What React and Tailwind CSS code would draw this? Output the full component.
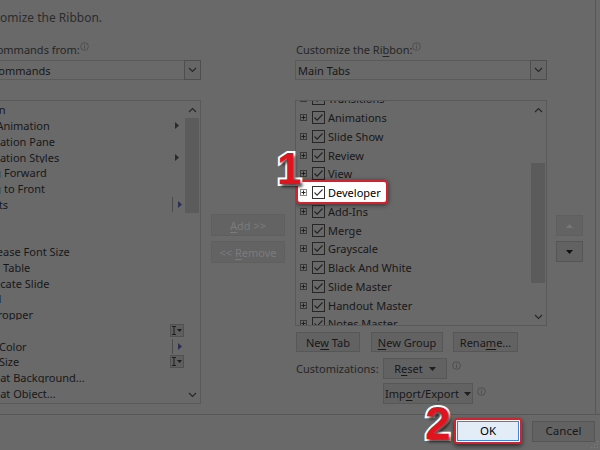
import React from 'react';

const leftItems = [
  { label: 'Action' },
  { label: 'Add Animation', right: 'arrow' },
  { label: 'Animation Pane' },
  { label: 'Animation Styles', right: 'arrow' },
  { label: 'Bring Forward' },
  { label: 'Bring to Front' },
  { label: 'Bullets', right: 'split' },
  { label: 'Copy' },
  { label: 'Cut' },
  { label: 'Decrease Font Size' },
  { label: 'Draw Table' },
  { label: 'Duplicate Slide' },
  { label: 'Email' },
  { label: 'Eyedropper' },
  { label: 'Font', right: 'field' },
  { label: 'Font Color', right: 'split' },
  { label: 'Font Size', right: 'field' },
  { label: 'Format Background...' },
  { label: 'Format Object...' },
];

const tabs = [
  'Transitions', 'Animations', 'Slide Show', 'Review', 'View', 'Developer',
  'Add-Ins', 'Merge', 'Grayscale', 'Black And White', 'Slide Master',
  'Handout Master', 'Notes Master',
];

function Chevron({ up }) {
  return (
    <svg width="9" height="6" viewBox="0 0 9 6">
      <path d={up ? 'M1 5l3.5-3.5L8 5' : 'M1 1l3.5 3.5L8 1'} fill="none" stroke="#262626" strokeWidth="1.1" />
    </svg>
  );
}

function Info() {
  return (
    <svg width="9" height="9" viewBox="0 0 10 10" className="shrink-0">
      <circle cx="5" cy="5" r="4.3" fill="none" stroke="#474747" strokeWidth="0.8" />
      <path d="M5 4.2v3.4M5 2.5v1" stroke="#474747" strokeWidth="0.9" />
    </svg>
  );
}

function Tri({ color = '#1e1e1e' }) {
  return (
    <svg width="7" height="4" viewBox="0 0 7 4">
      <path d="M0 0h7L3.5 4z" fill={color} />
    </svg>
  );
}

function RightWidget({ type }) {
  if (type === 'arrow') {
    return (
      <svg width="4" height="7" viewBox="0 0 4 7">
        <path d="M0 0l4 3.5L0 7z" fill="#2a2a2a" />
      </svg>
    );
  }
  if (type === 'split') {
    return (
      <div className="flex items-center h-full">
        <span className="w-px h-[15px] bg-[#4a4a4a] mr-[5px]" />
        <svg width="4" height="7" viewBox="0 0 4 7">
          <path d="M0 0l4 3.5L0 7z" fill="#2a2f55" />
        </svg>
      </div>
    );
  }
  if (type === 'field') {
    return (
      <div className="w-[14px] h-[13px] border border-[#505050] bg-[#5f5f5f] flex items-center justify-center gap-[1px]">
        <svg width="4" height="9" viewBox="0 0 4 9">
          <path d="M0 0.5h4M0 8.5h4M2 0.5v8" stroke="#1e1e1e" strokeWidth="1" />
        </svg>
        <svg width="5" height="3" viewBox="0 0 5 3">
          <path d="M0 0h5L2.5 3z" fill="#1e1e1e" />
        </svg>
      </div>
    );
  }
  return null;
}

function PlusBox({ light }) {
  return (
    <svg width="7" height="7" viewBox="0 0 7 7" className="shrink-0">
      <rect x="0.5" y="0.5" width="6" height="6" fill="none" stroke={light ? '#8a8a8a' : '#3a3a3a'} />
      <path d="M1.5 3.5h4M3.5 1.5v4" stroke={light ? '#222' : '#1e1e1e'} strokeWidth="1" />
    </svg>
  );
}

function Check({ light }) {
  return (
    <svg width="13" height="13" viewBox="0 0 13 13" className="shrink-0">
      <rect x="0.5" y="0.5" width="12" height="12" fill="none" stroke={light ? '#333' : '#262626'} />
      <path d="M2.5 6.5l2.6 2.6L10.5 3.5" fill="none" stroke={light ? '#333' : '#222'} strokeWidth="1.1" />
    </svg>
  );
}

function TabRow({ label, highlight }) {
  return (
    <div className="relative h-[18.75px] flex items-center pl-[4px] shrink-0">
      {highlight && (
        <span className="absolute left-0 top-[-3px] bottom-[-2px] w-[92px] bg-white border-2 border-[#d3222f] rounded-[4px] shadow-[0_1px_5px_rgba(0,0,0,0.55)]" />
      )}
      <span className="relative flex items-center">
        <PlusBox light={highlight} />
        <span className="ml-[5px]"><Check light={highlight} /></span>
        <span className={'ml-[3px] whitespace-nowrap ' + (highlight ? 'text-black' : '')}>{label}</span>
      </span>
    </div>
  );
}

function Btn({ className = '', children }) {
  return (
    <div className={'h-full border border-[#575757] bg-[#626262] flex items-center justify-center whitespace-nowrap ' + className}>
      {children}
    </div>
  );
}

function Dropdown({ text, pad = 'pl-[4px]' }) {
  return (
    <div className="mt-[3px] h-[20px] border border-[#5a5a5a] flex items-stretch">
      <div className={'flex-1 flex items-center whitespace-nowrap overflow-hidden ' + pad}>{text}</div>
      <div className="w-[17px] border border-[#4e4e4e] bg-[#666] flex items-center justify-center -my-px -mr-px">
        <Chevron />
      </div>
    </div>
  );
}

function Scrollbar({ thumbTop, thumbHeight }) {
  return (
    <div className="w-[16px] flex flex-col items-center">
      <div className="h-[17px] flex items-center justify-center shrink-0"><Chevron up /></div>
      <div className="flex-1 w-full flex flex-col">
        <div style={{ height: thumbTop }} className="shrink-0" />
        <div style={{ height: thumbHeight }} className="mx-[1px] bg-[#5b5b5b] shrink-0" />
      </div>
      <div className="h-[17px] flex items-center justify-center shrink-0"><Chevron /></div>
    </div>
  );
}

export default function App() {
  return (
    <div className="w-[600px] h-[450px] overflow-hidden relative bg-[#696969] text-[#181818] text-[11px] font-['Noto_Sans',sans-serif] leading-none">
      <div className="ml-[-48px] w-[648px] h-full flex flex-col">
        {/* top pane */}
        <div className="h-[415px] border-b border-[#575757] flex shrink-0">
          <div className="w-[644px] border-r border-[#575757] flex flex-col">
            <div className="h-[36px] flex items-center pl-[23px] text-[12px] text-[#2c2c2c] whitespace-nowrap">
              Customize the Ribbon.
            </div>
            <div className="flex pt-[5px]">
              {/* left column */}
              <div className="w-[249px] flex flex-col">
                <div className="h-[16px] flex items-center whitespace-nowrap text-[#262626] -ml-[2px]">
                  <span>Choose commands from:</span>
                  <span className="self-start mt-[1px]"><Info /></span>
                </div>
                <Dropdown text="Popular Commands" pad="pl-0 -ml-[5px]" />
                <div className="mt-[20px] h-[304px] border border-[#595959] flex overflow-hidden">
                  <div className="flex-1 flex flex-col pt-[1px] overflow-hidden">
                    {leftItems.map((it) => (
                      <div key={it.label} className="h-[15.75px] flex items-center shrink-0">
                        <div className="flex-1 pl-[20px] whitespace-nowrap overflow-hidden">{it.label}</div>
                        <div className="w-[14px] h-full flex items-center justify-center">
                          <RightWidget type={it.right} />
                        </div>
                      </div>
                    ))}
                  </div>
                  <Scrollbar thumbTop={0} thumbHeight={95} />
                </div>
              </div>

              {/* middle buttons */}
              <div className="w-[94px] flex flex-col pt-[173px] px-[10px] gap-[5px]">
                <div className="h-[22px] border border-[#5f5f5f] bg-[#636363] text-[#7b7b7b] flex items-center justify-center">
                  <span><u className="underline-offset-2">A</u>dd &gt;&gt;</span>
                </div>
                <div className="h-[22px] border border-[#5f5f5f] bg-[#636363] text-[#7b7b7b] flex items-center justify-center">
                  <span>&lt;&lt; <u className="underline-offset-2">R</u>emove</span>
                </div>
              </div>

              {/* right column */}
              <div className="w-[252px] flex flex-col">
                <div className="h-[16px] flex items-center whitespace-nowrap text-[#262626] pl-[1px]">
                  <span>Customize the Ri<u className="underline-offset-2">b</u>bon:</span>
                  <span className="self-start mt-[1px]"><Info /></span>
                </div>
                <Dropdown text="Main Tabs" pad="pl-[2px]" />
                <div className="mt-[20px] h-[226px] border border-[#595959] flex overflow-hidden">
                  <div className="flex-1 flex flex-col mt-[-11.5px]">
                    {tabs.map((t) => (
                      <TabRow key={t} label={t} highlight={t === 'Developer'} />
                    ))}
                  </div>
                  <Scrollbar thumbTop={45} thumbHeight={120} />
                </div>
                <div className="mt-[6px] h-[20px] flex gap-[10px] pl-[1px]">
                  <Btn className="w-[64px]"><span>Ne<u className="underline-offset-2">w</u> Tab</span></Btn>
                  <Btn className="w-[72px] ml-[1px]"><span><u className="underline-offset-2">N</u>ew Group</span></Btn>
                  <Btn className="w-[65px]"><span>Rena<u className="underline-offset-2">m</u>e...</span></Btn>
                </div>
                <div className="mt-[6px] h-[21px] flex items-center">
                  <span className="w-[88px] pl-[1px] text-[#262626]">Customizations:</span>
                  <Btn className="w-[64px] gap-[6px]"><span>R<u className="underline-offset-2">e</u>set</span><Tri /></Btn>
                  <span className="ml-[5px] self-start mt-[3px]"><Info /></span>
                </div>
                <div className="mt-[4px] h-[21px] flex items-center pl-[88px]">
                  <Btn className="w-[90px] gap-[5px]"><span>Imp<u className="underline-offset-2">o</u>rt/Export</span><Tri /></Btn>
                  <span className="ml-[4px] self-start mt-[4px]"><Info /></span>
                </div>
              </div>

              {/* up / down */}
              <div className="w-[27px] ml-[9px] flex flex-col pt-[174px] gap-[5px]">
                <div className="h-[21px] border border-[#5f5f5f] bg-[#636363] flex items-center justify-center">
                  <svg width="7" height="4" viewBox="0 0 7 4"><path d="M0 4h7L3.5 0z" fill="#777" /></svg>
                </div>
                <div className="h-[21px] border border-[#555] bg-[#626262] flex items-center justify-center">
                  <Tri color="#111" />
                </div>
              </div>
            </div>
          </div>
        </div>

        {/* footer */}
        <div className="flex items-center justify-end gap-[10px] pr-[5px] pt-[3px]">
          <div className="p-[1px] bg-white border-2 border-[#d3222f] rounded-[3px] shadow-[0_2px_5px_rgba(0,0,0,0.6)]">
            <div className="w-[62px] h-[20px] border border-[#3a86d4] bg-[#e3edf7] text-black flex items-center justify-center text-[11.5px]">
              OK
            </div>
          </div>
          <div className="w-[63px] h-[21px] border border-[#555] bg-[#626262] flex items-center justify-center text-[11.5px]">
            Cancel
          </div>
        </div>
      </div>

      {/* resize grip */}
      <svg width="9" height="9" viewBox="0 0 9 9" className="absolute right-[1px] bottom-[1px]">
        <g fill="#7a7a7a">
          <rect x="7" y="1" width="1.2" height="1.2" />
          <rect x="4" y="4" width="1.2" height="1.2" />
          <rect x="7" y="4" width="1.2" height="1.2" />
          <rect x="1" y="7" width="1.2" height="1.2" />
          <rect x="4" y="7" width="1.2" height="1.2" />
          <rect x="7" y="7" width="1.2" height="1.2" />
        </g>
      </svg>

      {/* annotation numbers */}
      <span className="absolute left-[277px] top-[147px] text-[44px] leading-none font-bold font-['Liberation_Sans',sans-serif] text-[#e0141e] [-webkit-text-stroke:4px_white] [paint-order:stroke_fill] [text-shadow:2px_3px_3px_rgba(0,0,0,0.7)]">
        1
      </span>
      <span className="absolute left-[425px] top-[400px] text-[46px] leading-none font-bold font-['Liberation_Sans',sans-serif] text-[#e0141e] [-webkit-text-stroke:4px_white] [paint-order:stroke_fill] [text-shadow:2px_3px_3px_rgba(0,0,0,0.7)]">
        2
      </span>
    </div>
  );
}
